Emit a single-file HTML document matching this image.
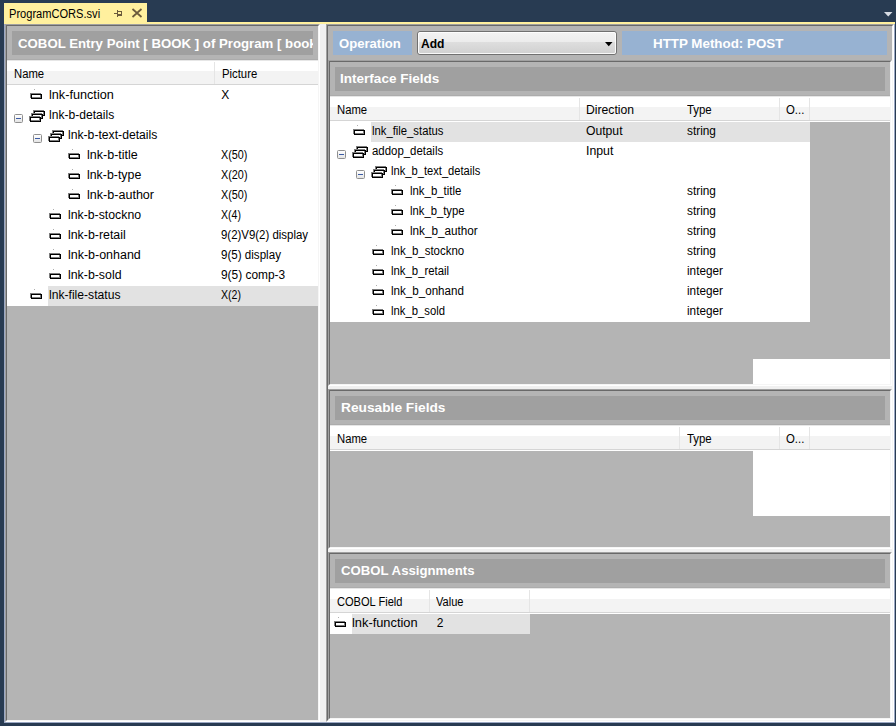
<!DOCTYPE html>
<html><head><meta charset="utf-8"><style>
html,body{margin:0;padding:0;}
body{width:896px;height:726px;background:#283b52;position:relative;overflow:hidden;font-family:"Liberation Sans", sans-serif;}
div{position:absolute;}
.t{line-height:20px;white-space:nowrap;}
</style></head><body>
<div style="left:4px;top:3px;width:143px;height:19px;background:#fff09e"></div>
<div class="t" style="left:8.70px;top:3.84px;font-size:12px;color:#000;transform:scaleX(0.9232);transform-origin:0 0;">ProgramCORS.svi</div>
<div style="left:114px;top:13px;width:3px;height:1px;background:#6b5a3c"></div>
<div style="left:117px;top:10px;width:1px;height:7px;background:#6b5a3c"></div>
<div style="left:117px;top:11px;width:5px;height:5px;border:1px solid #6b5a3c;border-bottom-width:2px;box-sizing:border-box"></div>
<svg style="position:absolute;left:131px;top:8px" width="12" height="10" viewBox="0 0 12 10"><path d="M1.5 1 L10.5 9 M10.5 1 L1.5 9" stroke="#6b5a3c" stroke-width="1.7"/></svg>
<svg style="position:absolute;left:884px;top:12px" width="9" height="5" viewBox="0 0 9 5"><path d="M0 0 H8.5 L4.25 4.5 Z" fill="#d6dbe3"/></svg>
<div style="left:4px;top:22px;width:891px;height:2px;background:#fff09e"></div>
<div style="left:4px;top:24px;width:891px;height:699px;background:#f0f0f0"></div>
<div style="left:4px;top:24px;width:1px;height:699px;background:#9ba8c4"></div>
<div style="left:894px;top:24px;width:1px;height:699px;background:#9ba8c4"></div>
<div style="left:4px;top:722px;width:891px;height:1px;background:#9ba8c4"></div>
<div style="left:5px;top:24px;width:315px;height:698px;background:#b4b4b4;border-style:solid;border-width:1px;border-color:#a0a0a0 #fff #fff #a0a0a0;box-sizing:border-box"></div>
<div style="left:6px;top:25px;width:313px;height:696px;border-style:solid;border-width:1px;border-color:#696969 #f5f5f5 #f5f5f5 #696969;box-sizing:border-box"></div>
<div style="left:12px;top:31px;width:301px;height:24px;background:#a0a0a0;overflow:hidden"></div>
<div style="left:12px;top:31px;width:301px;height:24px;overflow:hidden">
<div class="t" style="left:6.00px;top:2.50px;font-size:13px;color:#fff;font-weight:bold;position:absolute;transform:scaleX(1.017);transform-origin:0 0">COBOL Entry Point [ BOOK ] of Program [ book</div>
</div>
<div style="left:7px;top:60px;width:311px;height:246px;background:#fff"></div>
<div style="left:7px;top:60px;width:311px;height:11px;background:#fff"></div>
<div style="left:7px;top:71px;width:311px;height:13px;background:#f3f3f3"></div>
<div style="left:7px;top:60px;width:311px;height:1px;background:#e6e6e6"></div>
<div style="left:7px;top:59px;width:311px;height:1px;background:#acacac"></div>
<div style="left:7px;top:84px;width:311px;height:1px;background:#d5d5d5"></div>
<div style="left:7px;top:85px;width:311px;height:1px;background:#fff"></div>
<div class="t" style="left:14.00px;top:63.84px;font-size:12px;color:#000;transform:scaleX(0.9406);transform-origin:0 0;">Name</div>
<div class="t" style="left:221.50px;top:63.84px;font-size:12px;color:#000;transform:scaleX(0.9421);transform-origin:0 0;">Picture</div>
<div style="left:214px;top:62px;width:1px;height:22px;background:#e5e5e5"></div>
<div style="left:30px;top:93px;width:11px;height:5px;border:1px solid #7c7c7c;box-sizing:border-box;background:#fff"></div>
<div style="left:31px;top:94px;width:11px;height:5px;border:1px solid #000;box-sizing:border-box"></div>
<div style="left:34px;top:89px;width:1px;height:1px;background:#b0b0b0"></div>
<div class="t" style="left:48.70px;top:84.84px;font-size:12px;color:#000;transform:scaleX(1.0557);transform-origin:0 0;">lnk-function</div>
<div class="t" style="left:221.20px;top:84.84px;font-size:12px;color:#000;">X</div>
<div style="left:14px;top:114px;width:9px;height:9px;border:1px solid #8f8f8f;border-radius:1.5px;box-sizing:border-box;background:linear-gradient(#fff,#e4e4e4)"></div>
<div style="left:16px;top:118px;width:5px;height:1px;background:#3b5ba5"></div>
<div style="left:33px;top:110px;width:11px;height:5px;border:1px solid #7c7c7c;box-sizing:border-box;background:#fff"></div>
<div style="left:34px;top:111px;width:11px;height:5px;border:1px solid #000;box-sizing:border-box"></div>
<div style="left:31px;top:113px;width:11px;height:5px;border:1px solid #7c7c7c;box-sizing:border-box;background:#fff"></div>
<div style="left:32px;top:114px;width:11px;height:5px;border:1px solid #000;box-sizing:border-box"></div>
<div style="left:29px;top:116px;width:11px;height:5px;border:1px solid #7c7c7c;box-sizing:border-box;background:#fff"></div>
<div style="left:30px;top:117px;width:11px;height:5px;border:1px solid #000;box-sizing:border-box"></div>
<div class="t" style="left:48.70px;top:104.84px;font-size:12px;color:#000;transform:scaleX(1.0077);transform-origin:0 0;">lnk-b-details</div>
<div style="left:33px;top:134px;width:9px;height:9px;border:1px solid #8f8f8f;border-radius:1.5px;box-sizing:border-box;background:linear-gradient(#fff,#e4e4e4)"></div>
<div style="left:35px;top:138px;width:5px;height:1px;background:#3b5ba5"></div>
<div style="left:52px;top:130px;width:11px;height:5px;border:1px solid #7c7c7c;box-sizing:border-box;background:#fff"></div>
<div style="left:53px;top:131px;width:11px;height:5px;border:1px solid #000;box-sizing:border-box"></div>
<div style="left:50px;top:133px;width:11px;height:5px;border:1px solid #7c7c7c;box-sizing:border-box;background:#fff"></div>
<div style="left:51px;top:134px;width:11px;height:5px;border:1px solid #000;box-sizing:border-box"></div>
<div style="left:48px;top:136px;width:11px;height:5px;border:1px solid #7c7c7c;box-sizing:border-box;background:#fff"></div>
<div style="left:49px;top:137px;width:11px;height:5px;border:1px solid #000;box-sizing:border-box"></div>
<div class="t" style="left:67.70px;top:124.84px;font-size:12px;color:#000;transform:scaleX(1.0148);transform-origin:0 0;">lnk-b-text-details</div>
<div style="left:68px;top:153px;width:11px;height:5px;border:1px solid #7c7c7c;box-sizing:border-box;background:#fff"></div>
<div style="left:69px;top:154px;width:11px;height:5px;border:1px solid #000;box-sizing:border-box"></div>
<div style="left:72px;top:149px;width:1px;height:1px;background:#b0b0b0"></div>
<div class="t" style="left:86.70px;top:144.84px;font-size:12px;color:#000;transform:scaleX(1.0429);transform-origin:0 0;">lnk-b-title</div>
<div class="t" style="left:221.20px;top:144.84px;font-size:12px;color:#000;transform:scaleX(0.9000);transform-origin:0 0;">X(50)</div>
<div style="left:68px;top:173px;width:11px;height:5px;border:1px solid #7c7c7c;box-sizing:border-box;background:#fff"></div>
<div style="left:69px;top:174px;width:11px;height:5px;border:1px solid #000;box-sizing:border-box"></div>
<div style="left:72px;top:169px;width:1px;height:1px;background:#b0b0b0"></div>
<div class="t" style="left:86.70px;top:164.84px;font-size:12px;color:#000;transform:scaleX(1.0302);transform-origin:0 0;">lnk-b-type</div>
<div class="t" style="left:221.20px;top:164.84px;font-size:12px;color:#000;transform:scaleX(0.9034);transform-origin:0 0;">X(20)</div>
<div style="left:68px;top:193px;width:11px;height:5px;border:1px solid #7c7c7c;box-sizing:border-box;background:#fff"></div>
<div style="left:69px;top:194px;width:11px;height:5px;border:1px solid #000;box-sizing:border-box"></div>
<div style="left:72px;top:189px;width:1px;height:1px;background:#b0b0b0"></div>
<div class="t" style="left:86.70px;top:184.84px;font-size:12px;color:#000;transform:scaleX(1.0469);transform-origin:0 0;">lnk-b-author</div>
<div class="t" style="left:221.20px;top:184.84px;font-size:12px;color:#000;transform:scaleX(0.9000);transform-origin:0 0;">X(50)</div>
<div style="left:49px;top:213px;width:11px;height:5px;border:1px solid #7c7c7c;box-sizing:border-box;background:#fff"></div>
<div style="left:50px;top:214px;width:11px;height:5px;border:1px solid #000;box-sizing:border-box"></div>
<div style="left:53px;top:209px;width:1px;height:1px;background:#b0b0b0"></div>
<div class="t" style="left:67.70px;top:204.84px;font-size:12px;color:#000;transform:scaleX(1.0236);transform-origin:0 0;">lnk-b-stockno</div>
<div class="t" style="left:221.20px;top:204.84px;font-size:12px;color:#000;transform:scaleX(0.8783);transform-origin:0 0;">X(4)</div>
<div style="left:49px;top:233px;width:11px;height:5px;border:1px solid #7c7c7c;box-sizing:border-box;background:#fff"></div>
<div style="left:50px;top:234px;width:11px;height:5px;border:1px solid #000;box-sizing:border-box"></div>
<div style="left:53px;top:229px;width:1px;height:1px;background:#b0b0b0"></div>
<div class="t" style="left:67.70px;top:224.84px;font-size:12px;color:#000;transform:scaleX(1.0304);transform-origin:0 0;">lnk-b-retail</div>
<div class="t" style="left:221.20px;top:224.84px;font-size:12px;color:#000;transform:scaleX(0.9527);transform-origin:0 0;">9(2)V9(2) display</div>
<div style="left:49px;top:253px;width:11px;height:5px;border:1px solid #7c7c7c;box-sizing:border-box;background:#fff"></div>
<div style="left:50px;top:254px;width:11px;height:5px;border:1px solid #000;box-sizing:border-box"></div>
<div style="left:53px;top:249px;width:1px;height:1px;background:#b0b0b0"></div>
<div class="t" style="left:67.70px;top:244.84px;font-size:12px;color:#000;transform:scaleX(1.0386);transform-origin:0 0;">lnk-b-onhand</div>
<div class="t" style="left:221.20px;top:244.84px;font-size:12px;color:#000;transform:scaleX(0.9661);transform-origin:0 0;">9(5) display</div>
<div style="left:49px;top:273px;width:11px;height:5px;border:1px solid #7c7c7c;box-sizing:border-box;background:#fff"></div>
<div style="left:50px;top:274px;width:11px;height:5px;border:1px solid #000;box-sizing:border-box"></div>
<div style="left:53px;top:269px;width:1px;height:1px;background:#b0b0b0"></div>
<div class="t" style="left:67.70px;top:264.84px;font-size:12px;color:#000;transform:scaleX(1.0288);transform-origin:0 0;">lnk-b-sold</div>
<div class="t" style="left:221.20px;top:264.84px;font-size:12px;color:#000;transform:scaleX(0.9923);transform-origin:0 0;">9(5) comp-3</div>
<div style="left:48px;top:286px;width:270px;height:20px;background:#e2e2e2"></div>
<div style="left:30px;top:293px;width:11px;height:5px;border:1px solid #7c7c7c;box-sizing:border-box;background:#fff"></div>
<div style="left:31px;top:294px;width:11px;height:5px;border:1px solid #000;box-sizing:border-box"></div>
<div style="left:34px;top:289px;width:1px;height:1px;background:#b0b0b0"></div>
<div class="t" style="left:48.70px;top:284.84px;font-size:12px;color:#000;transform:scaleX(1.0113);transform-origin:0 0;">lnk-file-status</div>
<div class="t" style="left:221.20px;top:284.84px;font-size:12px;color:#000;transform:scaleX(0.8783);transform-origin:0 0;">X(2)</div>
<div style="left:326px;top:24px;width:568px;height:698px;background:#b4b4b4;border-style:solid;border-width:1px;border-color:#a0a0a0 #fff #fff #a0a0a0;box-sizing:border-box"></div>
<div style="left:327px;top:25px;width:566px;height:696px;border-style:solid;border-width:1px;border-color:#696969 #f5f5f5 #f5f5f5 #696969;box-sizing:border-box"></div>
<div style="left:333px;top:31px;width:79px;height:24px;background:#97b2d2"></div>
<div class="t" style="left:338.80px;top:33.50px;font-size:13px;color:#fff;font-weight:bold;transform:scaleX(1.0066);transform-origin:0 0;">Operation</div>
<div style="left:417px;top:31px;width:200px;height:24px;border:1px solid #707070;border-radius:3px;box-sizing:border-box;background:linear-gradient(#f3f3f3 0,#ececec 45%,#dedede 46%,#d0d0d0 100%)"></div>
<div style="left:418px;top:32px;width:198px;height:22px;border:1px solid rgba(255,255,255,.85);border-radius:2px;box-sizing:border-box"></div>
<div class="t" style="left:420.90px;top:33.80px;font-size:13px;color:#000;font-weight:bold;transform:scaleX(0.9280);transform-origin:0 0;">Add</div>
<svg style="position:absolute;left:605px;top:42px" width="8" height="5" viewBox="0 0 8 5"><path d="M0 0 H7.5 L3.75 4.2 Z" fill="#000"/></svg>
<div style="left:622px;top:31px;width:265px;height:24px;background:#97b2d2"></div>
<div class="t" style="left:652.50px;top:33.50px;font-size:13px;color:#fff;font-weight:bold;transform:scaleX(1.0276);transform-origin:0 0;">HTTP Method: POST</div>
<div style="left:328px;top:60px;width:564px;height:326px;background:#b4b4b4;border-style:solid;border-width:1px;border-color:#a0a0a0 #fff #fff #a0a0a0;box-sizing:border-box"></div>
<div style="left:329px;top:61px;width:562px;height:324px;border-style:solid;border-width:1px;border-color:#696969 #f5f5f5 #f5f5f5 #696969;box-sizing:border-box"></div>
<div style="left:335px;top:67px;width:550px;height:24px;background:#a0a0a0"></div>
<div class="t" style="left:340.40px;top:69.30px;font-size:13px;color:#fff;font-weight:bold;transform:scaleX(1.0421);transform-origin:0 0;">Interface Fields</div>
<div style="left:330px;top:96px;width:560px;height:11px;background:#fff"></div>
<div style="left:330px;top:107px;width:560px;height:13px;background:#f3f3f3"></div>
<div style="left:330px;top:96px;width:560px;height:1px;background:#e6e6e6"></div>
<div style="left:330px;top:95px;width:560px;height:1px;background:#acacac"></div>
<div style="left:330px;top:120px;width:560px;height:1px;background:#d5d5d5"></div>
<div style="left:330px;top:121px;width:560px;height:1px;background:#fff"></div>
<div class="t" style="left:337.00px;top:99.84px;font-size:12px;color:#000;transform:scaleX(0.9406);transform-origin:0 0;">Name</div>
<div class="t" style="left:585.90px;top:99.84px;font-size:12px;color:#000;transform:scaleX(1.0149);transform-origin:0 0;">Direction</div>
<div class="t" style="left:686.60px;top:99.84px;font-size:12px;color:#000;transform:scaleX(0.9500);transform-origin:0 0;">Type</div>
<div class="t" style="left:785.70px;top:99.84px;font-size:12px;color:#000;transform:scaleX(0.9474);transform-origin:0 0;">O...</div>
<div style="left:579px;top:98px;width:1px;height:22px;background:#e5e5e5"></div>
<div style="left:779px;top:98px;width:1px;height:22px;background:#e5e5e5"></div>
<div style="left:809px;top:98px;width:1px;height:22px;background:#e5e5e5"></div>
<div style="left:330px;top:121px;width:480px;height:201px;background:#fff"></div>
<div style="left:371px;top:122px;width:439px;height:20px;background:#e2e2e2"></div>
<div style="left:353px;top:129px;width:11px;height:5px;border:1px solid #7c7c7c;box-sizing:border-box;background:#fff"></div>
<div style="left:354px;top:130px;width:11px;height:5px;border:1px solid #000;box-sizing:border-box"></div>
<div style="left:357px;top:125px;width:1px;height:1px;background:#b0b0b0"></div>
<div class="t" style="left:371.70px;top:120.84px;font-size:12px;color:#000;transform:scaleX(0.9395);transform-origin:0 0;">lnk_file_status</div>
<div class="t" style="left:586.25px;top:120.84px;font-size:12px;color:#000;transform:scaleX(1.0135);transform-origin:0 0;">Output</div>
<div class="t" style="left:686.70px;top:120.84px;font-size:12px;color:#000;transform:scaleX(0.9862);transform-origin:0 0;">string</div>
<div style="left:337px;top:150px;width:9px;height:9px;border:1px solid #8f8f8f;border-radius:1.5px;box-sizing:border-box;background:linear-gradient(#fff,#e4e4e4)"></div>
<div style="left:339px;top:154px;width:5px;height:1px;background:#3b5ba5"></div>
<div style="left:356px;top:146px;width:11px;height:5px;border:1px solid #7c7c7c;box-sizing:border-box;background:#fff"></div>
<div style="left:357px;top:147px;width:11px;height:5px;border:1px solid #000;box-sizing:border-box"></div>
<div style="left:354px;top:149px;width:11px;height:5px;border:1px solid #7c7c7c;box-sizing:border-box;background:#fff"></div>
<div style="left:355px;top:150px;width:11px;height:5px;border:1px solid #000;box-sizing:border-box"></div>
<div style="left:352px;top:152px;width:11px;height:5px;border:1px solid #7c7c7c;box-sizing:border-box;background:#fff"></div>
<div style="left:353px;top:153px;width:11px;height:5px;border:1px solid #000;box-sizing:border-box"></div>
<div class="t" style="left:371.70px;top:140.84px;font-size:12px;color:#000;transform:scaleX(0.9520);transform-origin:0 0;">addop_details</div>
<div class="t" style="left:586.25px;top:140.84px;font-size:12px;color:#000;transform:scaleX(1.0259);transform-origin:0 0;">Input</div>
<div style="left:356px;top:170px;width:9px;height:9px;border:1px solid #8f8f8f;border-radius:1.5px;box-sizing:border-box;background:linear-gradient(#fff,#e4e4e4)"></div>
<div style="left:358px;top:174px;width:5px;height:1px;background:#3b5ba5"></div>
<div style="left:375px;top:166px;width:11px;height:5px;border:1px solid #7c7c7c;box-sizing:border-box;background:#fff"></div>
<div style="left:376px;top:167px;width:11px;height:5px;border:1px solid #000;box-sizing:border-box"></div>
<div style="left:373px;top:169px;width:11px;height:5px;border:1px solid #7c7c7c;box-sizing:border-box;background:#fff"></div>
<div style="left:374px;top:170px;width:11px;height:5px;border:1px solid #000;box-sizing:border-box"></div>
<div style="left:371px;top:172px;width:11px;height:5px;border:1px solid #7c7c7c;box-sizing:border-box;background:#fff"></div>
<div style="left:372px;top:173px;width:11px;height:5px;border:1px solid #000;box-sizing:border-box"></div>
<div class="t" style="left:390.70px;top:160.84px;font-size:12px;color:#000;transform:scaleX(0.9302);transform-origin:0 0;">lnk_b_text_details</div>
<div style="left:391px;top:189px;width:11px;height:5px;border:1px solid #7c7c7c;box-sizing:border-box;background:#fff"></div>
<div style="left:392px;top:190px;width:11px;height:5px;border:1px solid #000;box-sizing:border-box"></div>
<div style="left:395px;top:185px;width:1px;height:1px;background:#b0b0b0"></div>
<div class="t" style="left:409.70px;top:180.84px;font-size:12px;color:#000;transform:scaleX(0.9500);transform-origin:0 0;">lnk_b_title</div>
<div class="t" style="left:686.70px;top:180.84px;font-size:12px;color:#000;transform:scaleX(0.9862);transform-origin:0 0;">string</div>
<div style="left:391px;top:209px;width:11px;height:5px;border:1px solid #7c7c7c;box-sizing:border-box;background:#fff"></div>
<div style="left:392px;top:210px;width:11px;height:5px;border:1px solid #000;box-sizing:border-box"></div>
<div style="left:395px;top:205px;width:1px;height:1px;background:#b0b0b0"></div>
<div class="t" style="left:409.70px;top:200.84px;font-size:12px;color:#000;transform:scaleX(0.9397);transform-origin:0 0;">lnk_b_type</div>
<div class="t" style="left:686.70px;top:200.84px;font-size:12px;color:#000;transform:scaleX(0.9862);transform-origin:0 0;">string</div>
<div style="left:391px;top:229px;width:11px;height:5px;border:1px solid #7c7c7c;box-sizing:border-box;background:#fff"></div>
<div style="left:392px;top:230px;width:11px;height:5px;border:1px solid #000;box-sizing:border-box"></div>
<div style="left:395px;top:225px;width:1px;height:1px;background:#b0b0b0"></div>
<div class="t" style="left:409.70px;top:220.84px;font-size:12px;color:#000;transform:scaleX(0.9768);transform-origin:0 0;">lnk_b_author</div>
<div class="t" style="left:686.70px;top:220.84px;font-size:12px;color:#000;transform:scaleX(0.9862);transform-origin:0 0;">string</div>
<div style="left:372px;top:249px;width:11px;height:5px;border:1px solid #7c7c7c;box-sizing:border-box;background:#fff"></div>
<div style="left:373px;top:250px;width:11px;height:5px;border:1px solid #000;box-sizing:border-box"></div>
<div style="left:376px;top:245px;width:1px;height:1px;background:#b0b0b0"></div>
<div class="t" style="left:390.70px;top:240.84px;font-size:12px;color:#000;transform:scaleX(0.9532);transform-origin:0 0;">lnk_b_stockno</div>
<div class="t" style="left:686.70px;top:240.84px;font-size:12px;color:#000;transform:scaleX(0.9862);transform-origin:0 0;">string</div>
<div style="left:372px;top:269px;width:11px;height:5px;border:1px solid #7c7c7c;box-sizing:border-box;background:#fff"></div>
<div style="left:373px;top:270px;width:11px;height:5px;border:1px solid #000;box-sizing:border-box"></div>
<div style="left:376px;top:265px;width:1px;height:1px;background:#b0b0b0"></div>
<div class="t" style="left:390.70px;top:260.84px;font-size:12px;color:#000;transform:scaleX(0.9459);transform-origin:0 0;">lnk_b_retail</div>
<div class="t" style="left:686.70px;top:260.84px;font-size:12px;color:#000;transform:scaleX(0.9784);transform-origin:0 0;">integer</div>
<div style="left:372px;top:289px;width:11px;height:5px;border:1px solid #7c7c7c;box-sizing:border-box;background:#fff"></div>
<div style="left:373px;top:290px;width:11px;height:5px;border:1px solid #000;box-sizing:border-box"></div>
<div style="left:376px;top:285px;width:1px;height:1px;background:#b0b0b0"></div>
<div class="t" style="left:390.70px;top:280.84px;font-size:12px;color:#000;transform:scaleX(0.9667);transform-origin:0 0;">lnk_b_onhand</div>
<div class="t" style="left:686.70px;top:280.84px;font-size:12px;color:#000;transform:scaleX(0.9784);transform-origin:0 0;">integer</div>
<div style="left:372px;top:309px;width:11px;height:5px;border:1px solid #7c7c7c;box-sizing:border-box;background:#fff"></div>
<div style="left:373px;top:310px;width:11px;height:5px;border:1px solid #000;box-sizing:border-box"></div>
<div style="left:376px;top:305px;width:1px;height:1px;background:#b0b0b0"></div>
<div class="t" style="left:390.70px;top:300.84px;font-size:12px;color:#000;transform:scaleX(0.9404);transform-origin:0 0;">lnk_b_sold</div>
<div class="t" style="left:686.70px;top:300.84px;font-size:12px;color:#000;transform:scaleX(0.9784);transform-origin:0 0;">integer</div>
<div style="left:753px;top:359px;width:137px;height:25px;background:#fff"></div>
<div style="left:328px;top:386px;width:564px;height:3px;background:#f0f0f0"></div>
<div style="left:328px;top:389px;width:564px;height:160px;background:#b4b4b4;border-style:solid;border-width:1px;border-color:#a0a0a0 #fff #fff #a0a0a0;box-sizing:border-box"></div>
<div style="left:329px;top:390px;width:562px;height:158px;border-style:solid;border-width:1px;border-color:#696969 #f5f5f5 #f5f5f5 #696969;box-sizing:border-box"></div>
<div style="left:335px;top:396px;width:550px;height:24px;background:#a0a0a0"></div>
<div class="t" style="left:340.70px;top:398.10px;font-size:13px;color:#fff;font-weight:bold;transform:scaleX(1.0556);transform-origin:0 0;">Reusable Fields</div>
<div style="left:330px;top:425px;width:560px;height:11px;background:#fff"></div>
<div style="left:330px;top:436px;width:560px;height:13px;background:#f3f3f3"></div>
<div style="left:330px;top:425px;width:560px;height:1px;background:#e6e6e6"></div>
<div style="left:330px;top:424px;width:560px;height:1px;background:#acacac"></div>
<div style="left:330px;top:449px;width:560px;height:1px;background:#d5d5d5"></div>
<div style="left:330px;top:450px;width:560px;height:1px;background:#fff"></div>
<div class="t" style="left:337.00px;top:428.84px;font-size:12px;color:#000;transform:scaleX(0.9406);transform-origin:0 0;">Name</div>
<div class="t" style="left:686.60px;top:428.84px;font-size:12px;color:#000;transform:scaleX(0.9500);transform-origin:0 0;">Type</div>
<div class="t" style="left:785.70px;top:428.84px;font-size:12px;color:#000;transform:scaleX(0.9474);transform-origin:0 0;">O...</div>
<div style="left:679px;top:427px;width:1px;height:22px;background:#e5e5e5"></div>
<div style="left:779px;top:427px;width:1px;height:22px;background:#e5e5e5"></div>
<div style="left:809px;top:427px;width:1px;height:22px;background:#e5e5e5"></div>
<div style="left:753px;top:451px;width:137px;height:65px;background:#fff"></div>
<div style="left:328px;top:549px;width:564px;height:3px;background:#f0f0f0"></div>
<div style="left:328px;top:552px;width:564px;height:168px;background:#b4b4b4;border-style:solid;border-width:1px;border-color:#a0a0a0 #fff #fff #a0a0a0;box-sizing:border-box"></div>
<div style="left:329px;top:553px;width:562px;height:166px;border-style:solid;border-width:1px;border-color:#696969 #f5f5f5 #f5f5f5 #696969;box-sizing:border-box"></div>
<div style="left:335px;top:559px;width:550px;height:24px;background:#a0a0a0"></div>
<div class="t" style="left:340.70px;top:561.10px;font-size:13px;color:#fff;font-weight:bold;transform:scaleX(1.0153);transform-origin:0 0;">COBOL Assignments</div>
<div style="left:330px;top:588px;width:560px;height:11px;background:#fff"></div>
<div style="left:330px;top:599px;width:560px;height:13px;background:#f3f3f3"></div>
<div style="left:330px;top:588px;width:560px;height:1px;background:#e6e6e6"></div>
<div style="left:330px;top:587px;width:560px;height:1px;background:#acacac"></div>
<div style="left:330px;top:612px;width:560px;height:1px;background:#d5d5d5"></div>
<div style="left:330px;top:613px;width:560px;height:1px;background:#fff"></div>
<div class="t" style="left:336.80px;top:591.84px;font-size:12px;color:#000;transform:scaleX(0.9225);transform-origin:0 0;">COBOL Field</div>
<div class="t" style="left:436.25px;top:591.84px;font-size:12px;color:#000;transform:scaleX(0.9233);transform-origin:0 0;">Value</div>
<div style="left:429px;top:590px;width:1px;height:22px;background:#e5e5e5"></div>
<div style="left:529px;top:590px;width:1px;height:22px;background:#e5e5e5"></div>
<div style="left:330px;top:613px;width:200px;height:21px;background:#fff"></div>
<div style="left:352px;top:614px;width:178px;height:20px;background:#e2e2e2"></div>
<div style="left:334px;top:621px;width:11px;height:5px;border:1px solid #7c7c7c;box-sizing:border-box;background:#fff"></div>
<div style="left:335px;top:622px;width:11px;height:5px;border:1px solid #000;box-sizing:border-box"></div>
<div style="left:338px;top:617px;width:1px;height:1px;background:#b0b0b0"></div>
<div class="t" style="left:352.30px;top:612.84px;font-size:12px;color:#000;transform:scaleX(1.0689);transform-origin:0 0;">lnk-function</div>
<div class="t" style="left:436.80px;top:612.84px;font-size:12px;color:#000;">2</div>
</body></html>
